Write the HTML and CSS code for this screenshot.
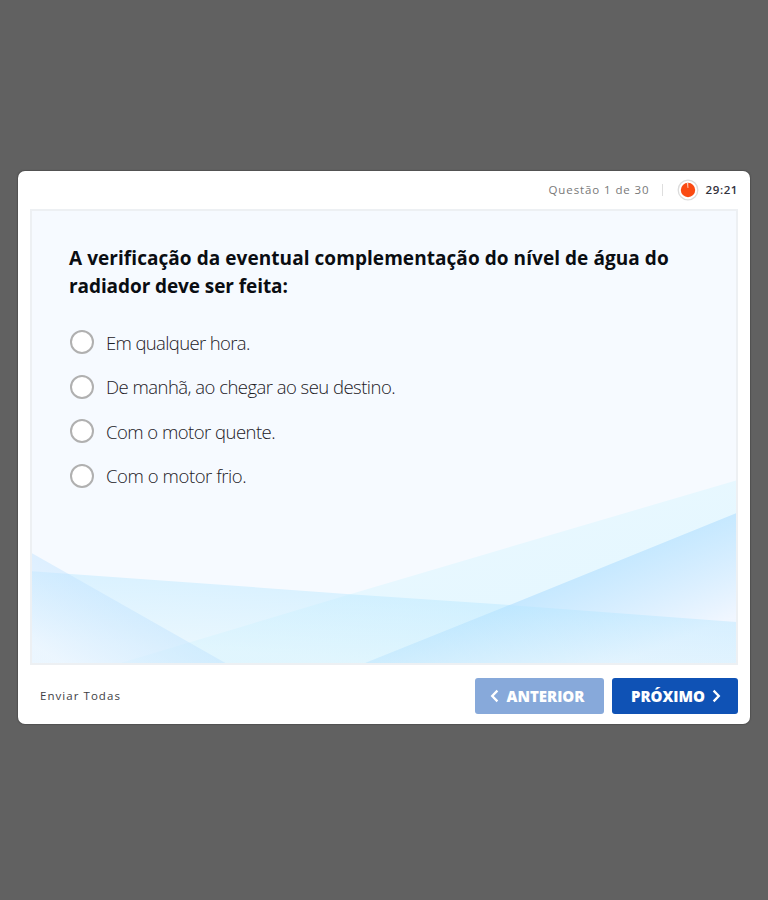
FILE: index.html
```
<!DOCTYPE html>
<html lang="pt-BR">
<head>
    <meta charset="UTF-8">
    <meta name="viewport" content="width=device-width, initial-scale=1.0">
    <title>Simulado</title>
    <link rel="stylesheet" href="styles.css">
</head>
<body>
    <main class="player">
        <header class="topbar">
            <span class="counter">Questão 1 de 30</span>
            <span class="divider"></span>
            <svg class="clock" viewBox="0 0 22 22">
                <circle cx="11" cy="11" r="9.8" fill="#fff" stroke="#dcdcdc" stroke-width="1.3"/>
                <circle cx="11" cy="11" r="7.2" fill="#fa4a12"/>
                <path d="M11 9V3.8L10.2 3.9z" fill="#fff" stroke="#ffc9b5" stroke-width=".5"/>
            </svg>
            <span class="time">29:21</span>
        </header>

        <section class="slide">
            <svg class="waves" viewBox="31 210 706 453" preserveAspectRatio="none">
                <defs>
                    <linearGradient id="g-left" gradientUnits="userSpaceOnUse" x1="130" y1="608" x2="90" y2="678">
                        <stop offset="0" stop-color="#bfe2ff" stop-opacity=".45"/>
                        <stop offset="1" stop-color="#ecf5ff" stop-opacity=".6"/>
                    </linearGradient>
                    <linearGradient id="g-down" gradientUnits="userSpaceOnUse" x1="384" y1="596" x2="379" y2="664">
                        <stop offset="0" stop-color="#b4e6ff" stop-opacity=".42"/>
                        <stop offset="1" stop-color="#d8f3fc" stop-opacity=".4"/>
                    </linearGradient>
                    <linearGradient id="g-up" gradientUnits="userSpaceOnUse" x1="400" y1="579" x2="430" y2="679">
                        <stop offset="0" stop-color="#d8f5ff" stop-opacity=".5"/>
                        <stop offset="1" stop-color="#daf5ff" stop-opacity=".6"/>
                    </linearGradient>
                    <linearGradient id="g-right" gradientUnits="userSpaceOnUse" x1="600" y1="568" x2="636" y2="657">
                        <stop offset="0" stop-color="#b4e0ff" stop-opacity=".64"/>
                        <stop offset="1" stop-color="#f4f6ff" stop-opacity=".75"/>
                    </linearGradient>
                </defs>
                <path d="M120 663L350 594L737 480V663z" fill="url(#g-up)"/>
                <path d="M365 663L512 604L737 513V663z" fill="url(#g-right)"/>
                <path d="M31 571L350 594L512 605L737 622V663H31z" fill="url(#g-down)"/>
                <path d="M31 553L225 663H31z" fill="url(#g-left)"/>
            </svg>
            <div class="content">
                <h1>A verificação da eventual complementação do nível de água do<br><span class="line2">radiador deve ser feita:</span></h1>
                <ul class="answers">
                    <li><span class="radio"></span><span class="first">Em qualquer hora.</span></li>
                    <li><span class="radio"></span><span>De manhã, ao chegar ao seu destino.</span></li>
                    <li><span class="radio"></span><span>Com o motor quente.</span></li>
                    <li><span class="radio"></span><span class="last">Com o motor frio.</span></li>
                </ul>
            </div>
        </section>

        <footer class="bottombar">
            <a class="submit">Enviar Todas</a>
            <button class="btn prev">
                <svg class="chev" viewBox="0 0 9 14"><path d="M7.4 1.6L2.2 7L7.4 12.4"/></svg>
                <span>ANTERIOR</span>
            </button>
            <button class="btn next">
                <span>PRÓXIMO</span>
                <svg class="chev" viewBox="0 0 9 14"><path d="M1.6 1.6L6.8 7L1.6 12.4"/></svg>
            </button>
        </footer>
    </main>
</body>
</html>
```
FILE: styles.css
```
* { box-sizing: border-box; }
body { margin: 0; height: 900px; padding: 171px 18px 0; background-color: #616161; font-family: 'Open Sans', 'Noto Sans', sans-serif; overflow: hidden; }
.player { width: 732px; height: 553px; padding: 0 12px; background-color: #fff; border-radius: 7px; box-shadow: 0 0 1px 1px rgba(65, 65, 65, 0.5); display: flex; flex-direction: column; }

.topbar { height: 38px; display: flex; align-items: center; justify-content: flex-end; white-space: nowrap; }
.counter { color: #787878; font-size: 11.5px; letter-spacing: 0.9px; padding-bottom: 2px; }
.divider { width: 1px; height: 12px; margin: 0 14px 0 12px; background-color: #dedede; }
.clock { width: 22px; height: 22px; margin-right: 7px; }
.time { color: #33333d; font-size: 11.5px; font-weight: 600; letter-spacing: 0.6px; padding-bottom: 2px; }

.slide { position: relative; height: 456px; border: 2px solid #edf0f3; background-color: #f6faff; }
.waves { position: absolute; left: 0; top: 0; width: 100%; height: 100%; }
.content { position: relative; padding: 33px 0 0 37px; white-space: nowrap; }
h1 { margin: 0; font-size: 19px; line-height: 28px; font-weight: 700; letter-spacing: 0.06px; color: #0a0d12; }
.line2 { letter-spacing: -0.08px; }

.answers { list-style: none; margin: 20px 0 0; padding: 0; }
.answers li { display: flex; align-items: center; height: 44.5px; font-size: 18.5px; font-weight: 300; letter-spacing: -0.53px; color: #1c2026; }
.radio { width: 24px; height: 24px; margin: 0 12px 0 1px; border: 2px solid #b0b0b0; border-radius: 50%; background-color: #fff; }
.first { letter-spacing: -0.64px; }
.last { letter-spacing: -0.43px; }

.bottombar { flex: 1; display: flex; align-items: center; padding-top: 3px; }
.submit { margin: 0 auto 0 10px; color: #3e3e44; font-size: 11.5px; letter-spacing: 1.05px; padding-bottom: 2px; }
.btn { display: flex; align-items: center; justify-content: center; height: 36px; padding: 0 0 1px; border: none; border-radius: 3px; color: #fff; font-family: inherit; font-size: 15px; font-weight: 800; }
.prev { width: 129px; gap: 8px; padding-right: 5px; margin-right: 8px; background-color: #87a9da; }
.next { width: 126px; gap: 7px; padding-left: 2px; background-color: #0f52b5; }
.chev { width: 9px; height: 14px; fill: none; stroke: #fff; stroke-width: 2.3; }
```
